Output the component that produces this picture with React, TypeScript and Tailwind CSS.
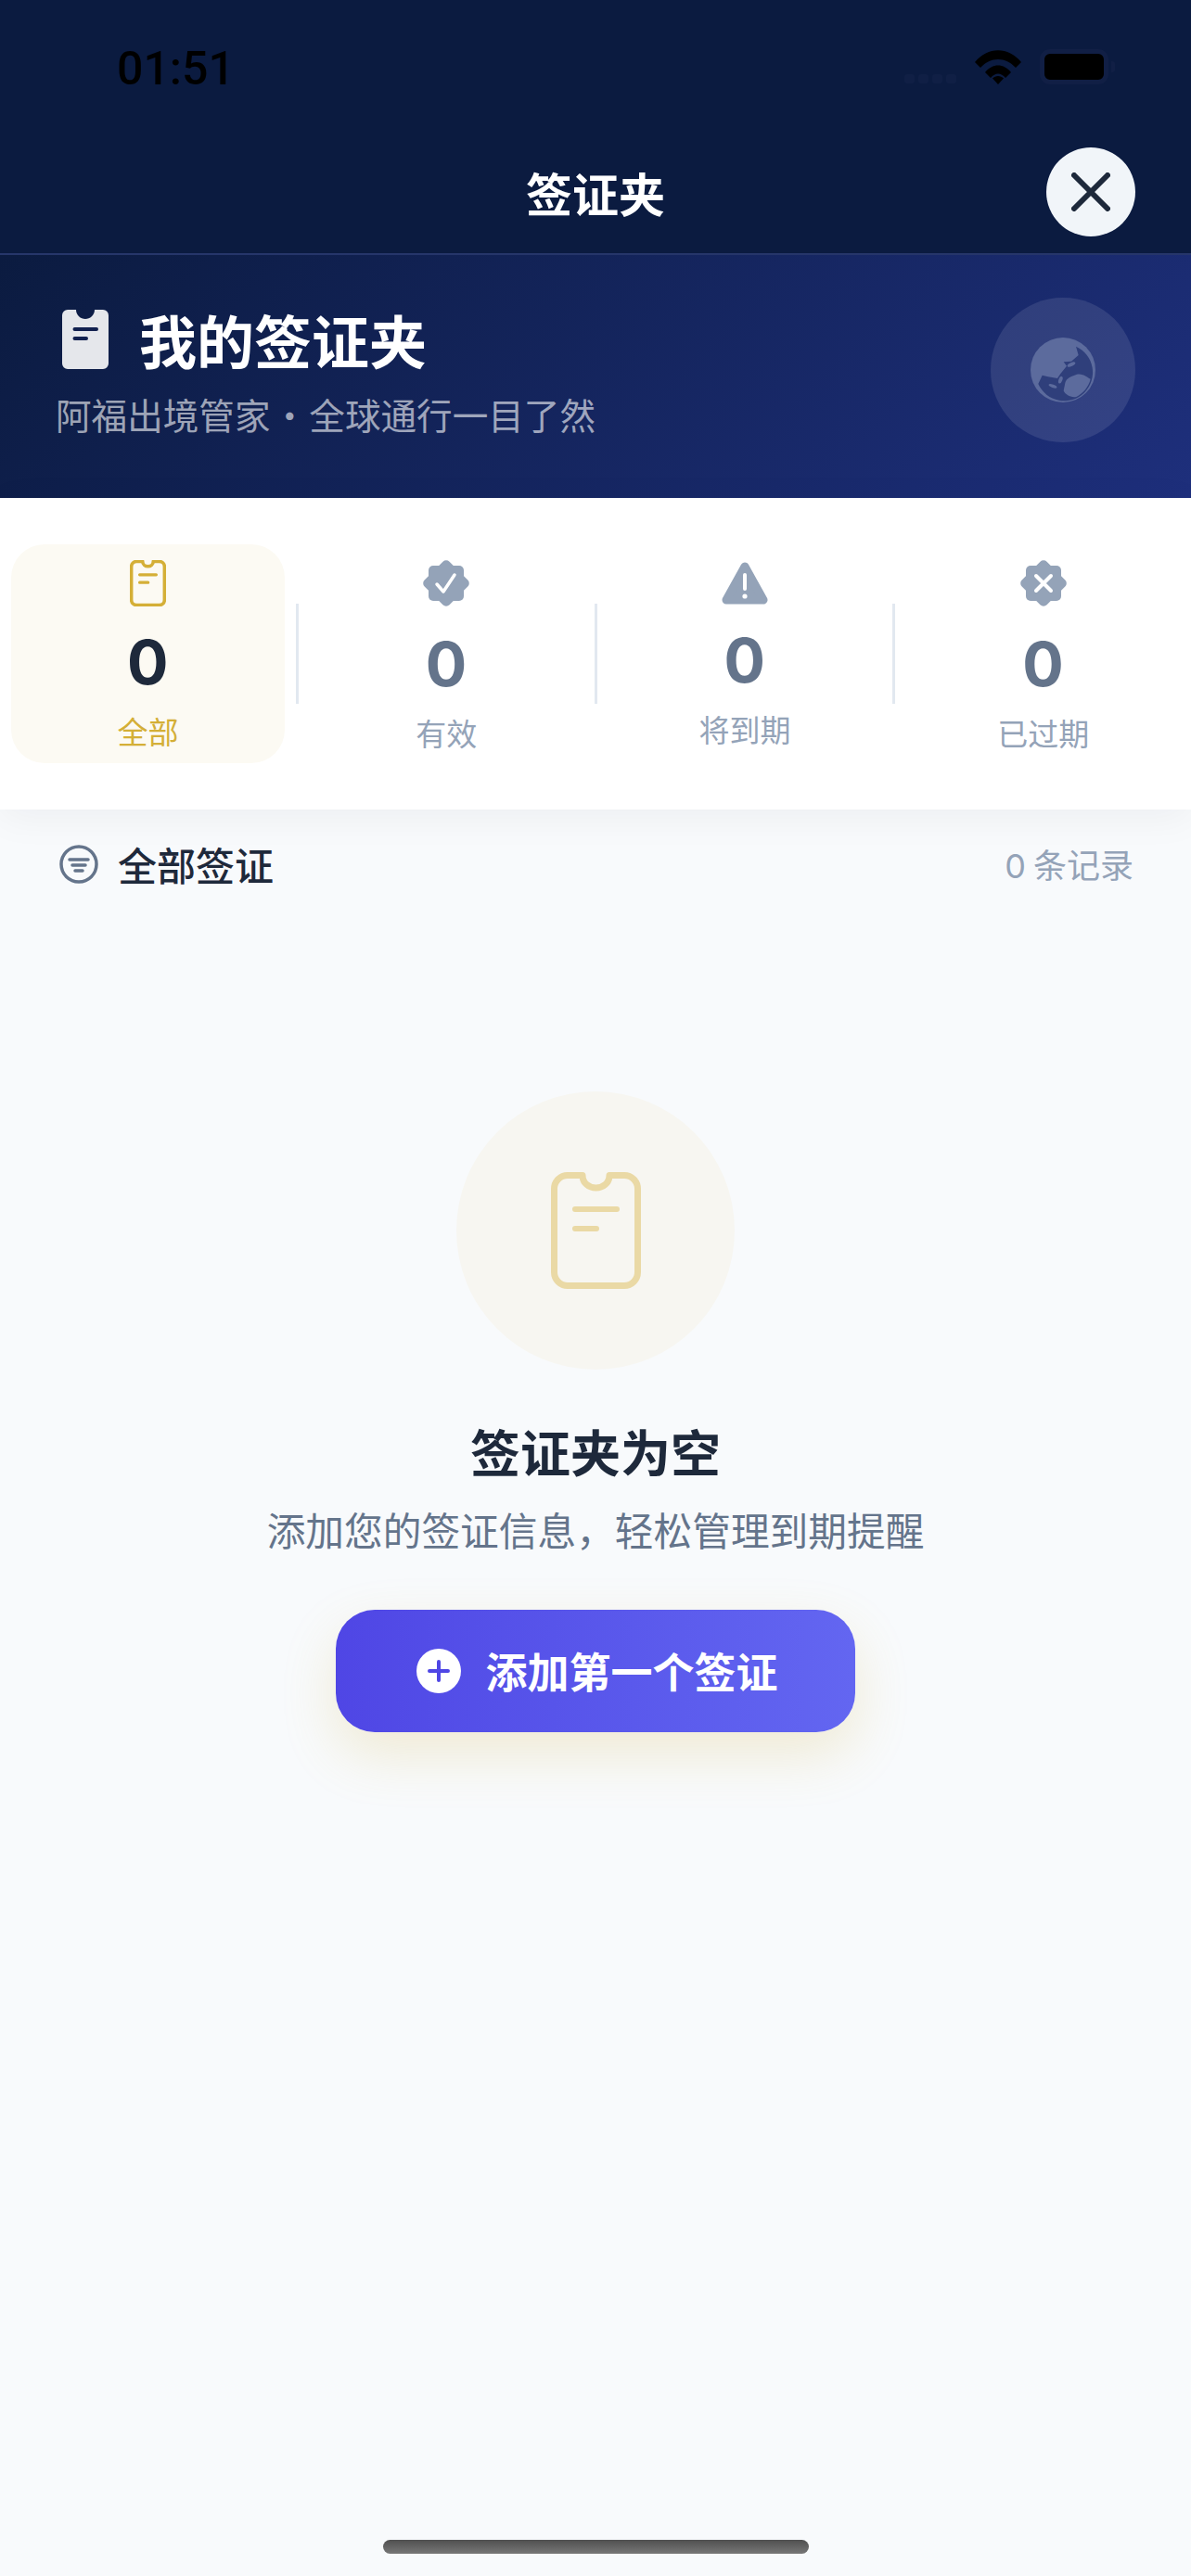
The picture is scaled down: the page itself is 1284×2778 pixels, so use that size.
const cardOutline =
  'M34 3.5H18A14.5 14.5 0 0 0 3.5 18V108A14.5 14.5 0 0 0 18 122.5H79A14.5 14.5 0 0 0 93.5 108V18A14.5 14.5 0 0 0 79 3.5H63C63 12 56 17 48.5 17C41 17 34 12 34 3.5Z';

function VisaCard({ className, stroke, weight }: { className: string; stroke: string; weight: number }) {
  return (
    <svg viewBox="0 0 97 126" className={className} fill="none" stroke={stroke} strokeWidth={weight} strokeLinejoin="round" strokeLinecap="round">
      <path d={cardOutline} />
      <path d="M26 40H71M26 61H49" strokeWidth={weight - 1} />
    </svg>
  );
}

function Badge({ kind }: { kind: 'check' | 'cross' }) {
  return (
    <svg viewBox="0 0 54 54" className="w-[54px] h-[54px]">
      <rect x="8" y="8" width="38" height="38" rx="5" fill="#94a3b8" />
      <rect x="8" y="8" width="38" height="38" rx="5" fill="#94a3b8" transform="rotate(45 27 27)" />
      {kind === 'check' ? (
        <path d="M17 28L24 36L36 18" fill="none" stroke="#fff" strokeWidth="3.5" strokeLinecap="round" strokeLinejoin="round" />
      ) : (
        <path d="M19 19L35 35M35 19L19 35" fill="none" stroke="#fff" strokeWidth="4" strokeLinecap="round" />
      )}
    </svg>
  );
}

function Warning() {
  return (
    <svg viewBox="0 0 50 46" className="w-[50px] h-[46px]">
      <path d="M25 5L45 41H5Z" fill="#94a3b8" stroke="#94a3b8" strokeWidth="9" strokeLinejoin="round" />
      <path d="M25 14V29" stroke="#fff" strokeWidth="4" strokeLinecap="round" />
      <circle cx="25" cy="37" r="2.6" fill="#fff" />
    </svg>
  );
}

function Globe() {
  return (
    <svg viewBox="0 0 210 210" className="w-[70px] h-[70px]">
      <circle cx="105" cy="105" r="105" fill="#5c6b9d" />
      <path d="M147 29A92 92 0 1 1 25 150L38 122L57 127L87 132L97 117L117 92L107 79L132 77L155 57Z" fill="#2f3f7b" />
      <path d="M112 147C115 130 135 125 150 119C170 115 185 130 194 134C188 160 170 180 148 192C130 195 112 185 107 172Z" fill="#5c6b9d" />
      <ellipse cx="132" cy="87" rx="14" ry="6" transform="rotate(-25 132 87)" fill="#5c6b9d" />
      <ellipse cx="97" cy="137" rx="6" ry="12" transform="rotate(20 97 137)" fill="#5c6b9d" />
      <ellipse cx="72" cy="157" rx="14" ry="5" transform="rotate(20 72 157)" fill="#5c6b9d" />
    </svg>
  );
}

const tabs = [
  { label: '全部', icon: <VisaCard className="w-[39px] h-[50px]" stroke="#d4af37" weight={9} />, active: true },
  { label: '有效', icon: <Badge kind="check" />, active: false },
  { label: '将到期', icon: <Warning />, active: false },
  { label: '已过期', icon: <Badge kind="cross" />, active: false },
];

export default function App() {
  return (
    <div className="relative w-[1284px] h-[2778px] overflow-hidden flex flex-col bg-[#f8fafc] font-['Noto_Sans_CJK_SC',sans-serif]">
      {/* status bar + nav */}
      <div className="bg-[#0b1b40] border-b-[2px] border-[#26366a]">
        <div className="h-[159px] flex items-start justify-between pl-[126px] pr-[82px] pt-[44px]">
          <span className="font-['Roboto',sans-serif] font-medium text-[50px] leading-[60px] text-black">01:51</span>
          <div className="flex items-end gap-[20px] pt-[9px]">
            <div className="flex gap-[4px] mb-[1px]">
              {[0, 1, 2, 3].map((i) => (
                <div key={i} className="w-[11px] h-[10px] rounded-[3px] bg-[#101f45]" />
              ))}
            </div>
            <svg viewBox="0 0 50 38" className="w-[50px] h-[38px]">
              <path d="M0 14C14 -3 36 -3 50 14L44 20C33 8 17 8 6 20Z" fill="#000" />
              <path d="M11 25C19 15 31 15 39 25L33 31C28 25 22 25 17 31Z" fill="#000" />
              <path d="M19 31.5C22 28 28 28 31 31.5L25 38Z" fill="#000" />
            </svg>
            <div className="flex items-center">
              <div className="w-[74px] h-[38px] rounded-[11px] border-[5px] border-[#111f45] bg-black" />
              <div className="ml-[3px] w-[4px] h-[12px] rounded-r-[3px] bg-[#111f45]" />
            </div>
          </div>
        </div>
        <div className="relative h-[114px] pb-[18px] flex items-center justify-center">
          <span className="text-[50px] leading-[64px] font-bold text-white">签证夹</span>
          <button className="absolute right-[60px] top-0 w-[96px] h-[96px] rounded-full bg-[#f1f5f9] flex items-center justify-center">
            <svg viewBox="0 0 42 42" className="w-[42px] h-[42px]" fill="none" stroke="#1e293b" strokeWidth="6" strokeLinecap="round">
              <path d="M3 3L39 39M39 3L3 39" />
            </svg>
          </button>
        </div>
      </div>

      {/* banner */}
      <div className="h-[262px] flex items-center justify-between pl-[60px] pr-[60px] bg-[linear-gradient(135deg,#0b1b40,#1e2f7c)]">
        <div className="pb-[18px]">
          <div className="flex items-center gap-[33px] pl-[7px]">
            <svg viewBox="0 0 50 64" className="w-[50px] h-[64px]">
              <path
                d="M6 0H15C15 6 20 10 25 10C30 10 35 6 35 0H44A6 6 0 0 1 50 6V58A6 6 0 0 1 44 64H6A6 6 0 0 1 0 58V6A6 6 0 0 1 6 0Z"
                fill="#e5e7eb"
              />
              <path d="M13.5 21H37M13.5 31H26" stroke="#12214f" strokeWidth="4" strokeLinecap="round" />
            </svg>
            <span className="text-[62px] leading-[84px] font-bold text-white">我的签证夹</span>
          </div>
          <p className="mt-[13px] text-[38.6px] leading-[50px] text-white/60 [word-spacing:-7px]">阿福出境管家 · 全球通行一目了然</p>
        </div>
        <div className="mb-[14px] w-[156px] h-[156px] rounded-full bg-white/10 flex items-center justify-center">
          <Globe />
        </div>
      </div>

      {/* stat tabs */}
      <div className="relative z-10 h-[336px] bg-white shadow-[0_8px_40px_rgba(15,23,42,0.05)] flex items-center">
        {tabs.map((tab, i) => (
          <div key={tab.label} className="contents">
            <div className={`flex-1 h-[236px] pt-[4px] mx-[12px] rounded-[36px] flex flex-col items-center justify-center ${tab.active ? 'bg-[#fcfaf3]' : ''}`}>
              {tab.icon}
              <span className={`mt-[20px] font-['Inter',sans-serif] font-bold text-[66px] leading-[80px] ${tab.active ? 'text-[#1e293b]' : 'text-[#64748b]'}`}>0</span>
              <span className={`mt-[12px] text-[33px] leading-[44px] ${tab.active ? 'text-[#d4af37]' : 'text-[#94a3b8]'}`}>{tab.label}</span>
            </div>
            {i < 3 && <div className="w-[3px] h-[108px] bg-[#e2e8f0]" />}
          </div>
        ))}
      </div>

      {/* list header */}
      <div className="flex items-center justify-between pl-[64px] pr-[62px] pt-[31px]">
        <div className="flex items-center gap-[21px]">
          <svg viewBox="0 0 42 42" className="w-[42px] h-[42px]" fill="none" stroke="#64748b" strokeLinecap="round">
            <circle cx="21" cy="21" r="19" strokeWidth="3.5" />
            <path d="M11 16H31M14 22H28M17 28H25" strokeWidth="3.5" />
          </svg>
          <span className="text-[42px] leading-[56px] font-medium text-[#1e293b]">全部签证</span>
        </div>
        <span className="text-[36px] leading-[48px] text-[#94a3b8]"><span className="font-['Inter',sans-serif]">0</span> 条记录</span>
      </div>

      {/* empty state */}
      <div className="flex flex-col items-center pt-[217px]">
        <div className="w-[300px] h-[300px] rounded-full bg-[#f7f6f1] flex items-center justify-center">
          <VisaCard className="w-[97px] h-[126px]" stroke="#ead9a5" weight={7} />
        </div>
        <h2 className="mt-[52px] text-[54px] leading-[72px] font-bold text-[#1e293b]">签证夹为空</h2>
        <p className="mt-[20px] text-[41.7px] leading-[56px] text-[#64748b]">添加您的签证信息，轻松管理到期提醒</p>
        <button className="mt-[59px] pl-[4px] w-[560px] h-[132px] rounded-[42px] bg-gradient-to-r from-[#4f46e5] to-[#6366f1] shadow-[0_24px_60px_rgba(212,175,55,0.2)] flex items-center justify-center gap-[26px] text-white">
          <svg viewBox="0 0 48 48" className="w-[48px] h-[48px]">
            <circle cx="24" cy="24" r="24" fill="#fff" />
            <path d="M24 14V34M14 24H34" stroke="#4f46e5" strokeWidth="4" strokeLinecap="round" />
          </svg>
          <span className="text-[45px] leading-[60px] font-bold">添加第一个签证</span>
        </button>
      </div>

      {/* home indicator */}
      <div className="absolute left-[413px] top-[2739px] w-[459px] h-[15px] rounded-full bg-gradient-to-b from-[#505050] to-[#777777]" />
    </div>
  );
}
